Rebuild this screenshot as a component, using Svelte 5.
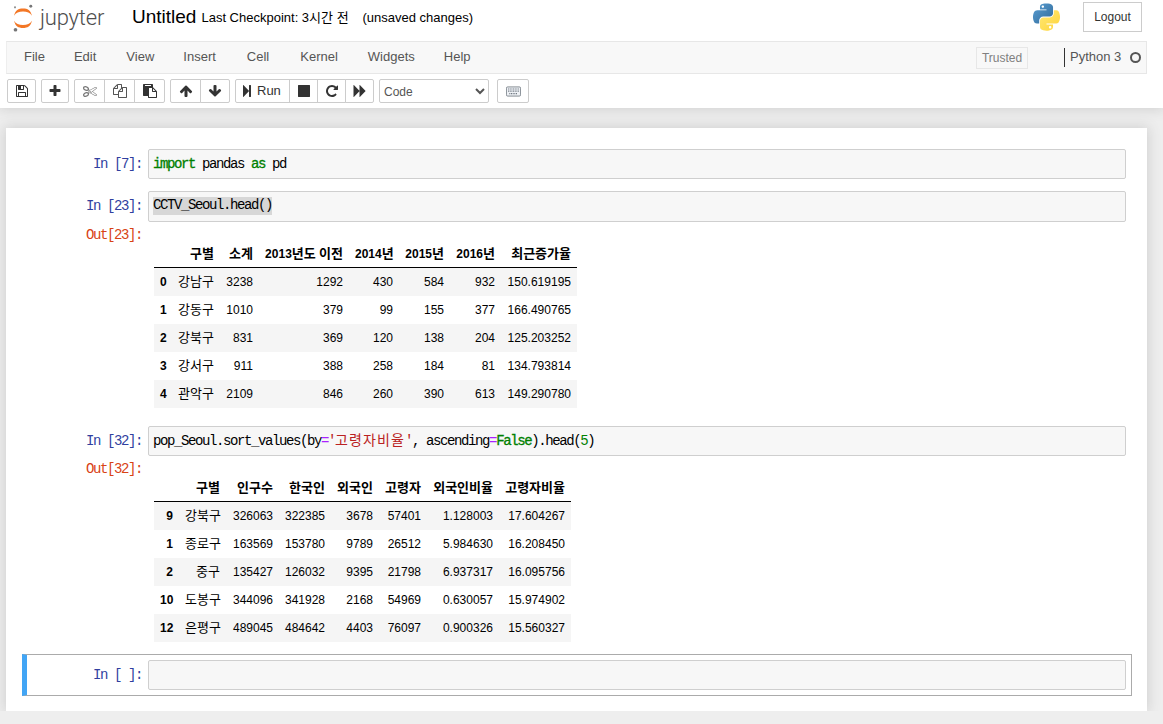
<script>
  const menus = ['File','Edit','View','Insert','Cell','Kernel','Widgets','Help'];
  const icon = {
    save:'M512 1536h768v-384h-768v384zm896 0h128v-896q0-14-10-38.500t-20-34.500l-281-281q-10-10-34-20t-39-10v416q0 40-28 68t-68 28h-576q-40 0-68-28t-28-68v-416h-128v1280h128v-416q0-40 28-68t68-28h832q40 0 68 28t28 68v416zm-384-928v-320q0-13-9.500-22.500t-22.500-9.500h-192q-13 0-22.500 9.500t-9.500 22.500v320q0 13 9.500 22.500t22.500 9.500h192q13 0 22.500-9.500t9.500-22.500zm640 32v928q0 40-28 68t-68 28h-1344q-40 0-68-28t-28-68v-1344q0-40 28-68t68-28h928q40 0 88 20t76 48l280 280q28 28 48 76t20 88z',
    plus:'M1600 736v192q0 40-28 68t-68 28h-416v416q0 40-28 68t-68 28h-192q-40 0-68-28t-28-68v-416h-416q-40 0-68-28t-28-68v-192q0-40 28-68t68-28h416v-416q0-40 28-68t68-28h192q40 0 68 28t28 68v416h416q40 0 68 28t28 68z',
    cut:'M960 896q26 0 45 19t19 45-19 45-45 19-45-19-19-45 19-45 45-19zm300 64l507 398q28 20 25 56-5 35-35 51l-128 64q-13 7-29 7-17 0-31-8l-690-387-110 66q-8 4-12 5 14 49 10 97-7 77-56 147.500t-132 123.500q-132 84-277 84-136 0-222-78-90-84-79-207 7-76 56-147t131-124q132-84 278-84 83 0 151 31 9-13 22-22l122-73-122-73q-13-9-22-22-68 31-151 31-146 0-278-84-82-53-131-124t-56-147q-5-59 15.500-113t63.500-93q85-79 222-79 145 0 277 84 83 52 132 123t56 148q4 48-10 97 4 1 12 5l110 66 690-387q14-8 31-8 16 0 29 7l128 64q30 16 35 51 3 36-25 56zm-681-260q46-42 21-108t-106-117q-92-59-192-59-74 0-113 36-46 42-21 108t106 117q92 59 192 59 74 0 113-36zm-85 745q81-51 106-117t-21-108q-39-36-113-36-100 0-192 59-81 51-106 117t21 108q39 36 113 36 100 0 192-59zm178-613l96 58v-11q0-36 33-56l14-8-79-47-26 26q-3 3-10 11t-12 12q-2 2-4 3.500t-3 2.500zm224 224l96 32 736-576-128-64-768 431v113l-160 96 9 8q2 2 7 6 4 4 11 12t11 12l26 26zm704 416l128-64-520-408-177 138q-2 3-13 7z',
    copy:'M1696 384q40 0 68 28t28 68v1216q0 40-28 68t-68 28h-960q-40 0-68-28t-28-68v-288h-544q-40 0-68-28t-28-68v-672q0-40 20-88t48-76l408-408q28-28 76-48t88-20h416q40 0 68 28t28 68v328q68-40 128-40h416zm-544 213l-299 299h299v-299zm-640-384l-299 299h299v-299zm196 647l316-316v-416h-384v416q0 40-28 68t-68 28h-416v640h512v-256q0-40 20-88t48-76zm956 804v-1152h-384v416q0 40-28 68t-68 28h-416v640h896z',
    paste:'M768 1664h896v-640h-416q-40 0-68-28t-28-68v-416h-384v1152zm256-1440v-64q0-13-9.500-22.500t-22.500-9.500h-704q-13 0-22.500 9.500t-9.500 22.500v64q0 13 9.500 22.500t22.500 9.500h704q13 0 22.500-9.500t9.500-22.500zm256 672h299l-299-299v299zm512 128v672q0 40-28 68t-68 28h-960q-40 0-68-28t-28-68v-160h-544q-40 0-68-28t-28-68v-1344q0-40 28-68t68-28h1088q40 0 68 28t28 68v328q21 13 36 28l408 408q28 28 48 76t20 88z',
    up:'M1675 971q0 51-37 90l-75 75q-38 38-91 38-54 0-90-38l-294-293v704q0 52-37.500 84.500t-90.500 32.500h-128q-53 0-90.500-32.500t-37.500-84.500v-704l-294 293q-36 38-90 38t-90-38l-75-75q-38-38-38-90 0-53 38-91l651-651q35-37 90-37 54 0 91 37l651 651q37 39 37 91z',
    down:'M1675 832q0 53-37 90l-651 652q-39 37-91 37-53 0-90-37l-651-652q-38-36-38-90 0-53 38-91l74-75q39-37 91-37 53 0 90 37l294 294v-704q0-52 38-90t90-38h128q52 0 90 38t38 90v704l294-294q37-37 90-37 52 0 91 37l75 75q37 39 37 91z',
    step:'M429 1651q-19 19-32 13t-13-32v-1472q0-26 13-32t32 13l710 710q9 9 13 19v-678q0-26 19-45t45-19h128q26 0 45 19t19 45v1408q0 26-19 45t-45 19h-128q-26 0-45-19t-19-45v-678q-4 10-13 19z',
    stop:'M1664 192v1408q0 26-19 45t-45 19h-1408q-26 0-45-19t-19-45v-1408q0-26 19-45t45-19h1408q26 0 45 19t19 45z',
    repeat:'M1664 256v448q0 26-19 45t-45 19h-448q-42 0-59-40-17-39 14-69l138-138q-148-137-349-137-104 0-198.500 40.500t-163.500 109.500-109.500 163.500-40.500 198.500 40.500 198.500 109.500 163.500 163.500 109.500 198.500 40.500q119 0 225-52t179-147q7-10 23-12 15 0 25 9l137 138q9 8 9.500 20.500t-7.500 22.500q-109 132-264 204.500t-327 72.500q-156 0-298-61t-245-164-164-245-61-298 61-298 164-245 245-164 298-61q147 0 284.500 55.500t244.500 156.500l130-129q29-31 70-14 39 17 39 59z',
    ff:'M109 1651q-19 19-32 13t-13-32v-1472q0-26 13-32t32 13l710 710q9 9 13 19v-710q0-26 13-32t32 13l710 710q19 19 19 45t-19 45l-710 710q-19 19-32 13t-13-32v-710q-4 10-13 19z'
  };
  const t1 = {
    widths:[18,48,39,90,50,51,51,76],
    head:['','구별','소계','2013년도 이전','2014년','2015년','2016년','최근증가율'],
    rows:[
      ['0','강남구','3238','1292','430','584','932','150.619195'],
      ['1','강동구','1010','379','99','155','377','166.490765'],
      ['2','강북구','831','369','120','138','204','125.203252'],
      ['3','강서구','911','388','258','184','81','134.793814'],
      ['4','관악구','2109','846','260','390','613','149.290780']
    ]
  };
  const t2 = {
    widths:[25,47,53,52,48,48,72,72],
    head:['','구별','인구수','한국인','외국인','고령자','외국인비율','고령자비율'],
    rows:[
      ['9','강북구','326063','322385','3678','57401','1.128003','17.604267'],
      ['1','종로구','163569','153780','9789','26512','5.984630','16.208450'],
      ['2','중구','135427','126032','9395','21798','6.937317','16.095756'],
      ['10','도봉구','344096','341928','2168','54969','0.630057','15.974902'],
      ['12','은평구','489045','484642','4403','76097','0.900326','15.560327']
    ]
  };
  const parts = (s) => s.split(/([가-힣]+)/).filter(Boolean);
  const isKo = (s) => /[가-힣]/.test(s);
  const total = (t) => t.widths.reduce((a, b) => a + b, 0);
</script>

{#snippet fa(name)}
  <svg class="fa {name}" viewBox="0 0 1792 1792" aria-hidden="true"><path d={icon[name]} /></svg>
{/snippet}

{#snippet txt(s)}{#each parts(s) as p}{#if isKo(p)}<span class="ko">{p}</span>{:else}{p}{/if}{/each}{/snippet}

{#snippet frame(t)}
  <table class="df" style="width:{total(t)}px">
    <colgroup>{#each t.widths as w}<col style="width:{w}px" />{/each}</colgroup>
    <thead><tr>{#each t.head as h}<th>{@render txt(h)}</th>{/each}</tr></thead>
    <tbody>
      {#each t.rows as r}
        <tr>{#each r as c, i}{#if i === 0}<th>{c}</th>{:else}<td>{@render txt(c)}</td>{/if}{/each}</tr>
      {/each}
    </tbody>
  </table>
{/snippet}

<div class="top">
  <header class="head">
    <div class="brand">
      <svg class="jlogo" viewBox="0 0 24 32" aria-hidden="true">
        <path fill="#f37726" d="M2.2 13.5C3.6 7.6 7 5.6 12 5.6s8.400 2 9.800 7.900C19.800 10.200 16.500 8.800 12 8.800S4.200 10.200 2.200 13.500z"/>
        <path fill="#f37726" d="M2.200 18.900C3.600 24.800 7 26.800 12 26.800s8.400-2 9.800-7.900c-2 3.300-5.300 4.700-9.800 4.700s-7.800-1.400-9.800-4.700z"/>
        <circle cx="20.500" cy="3.200" r="1.600" fill="#767677"/>
        <circle cx="3.800" cy="28.800" r="2" fill="#767677"/>
        <circle cx="3.300" cy="4.400" r="1.100" fill="#8a8a8a"/>
      </svg>
      <span class="word">jupyter</span>
    </div>
    <span class="title">Untitled</span>
    <span class="ckpt">Last Checkpoint: 3시간 전</span>
    <span class="unsaved">(unsaved changes)</span>
    <svg class="py" viewBox="0 0 111 112" aria-hidden="true">
      <defs>
        <linearGradient id="pb" x1="0" y1="0" x2="1" y2="1"><stop offset="0" stop-color="#5a9fd4"/><stop offset="1" stop-color="#306998"/></linearGradient>
        <linearGradient id="py" x1="0" y1="0" x2="1" y2="1"><stop offset="0" stop-color="#ffe873"/><stop offset="1" stop-color="#ffd43b"/></linearGradient>
      </defs>
      <path fill="url(#pb)" d="M54.919 0.001C50.335 0.022 45.958 0.413 42.106 1.095 30.760 3.099 28.700 7.295 28.700 15.032V25.250H55.513V28.656H28.700 18.638C10.845 28.656 3.906 33.344 1.763 42.263c-2.473 10.221-2.582 16.600 0 27.271 1.917 7.943 6.495 13.603 14.349 13.603H25.400V70.877c0-8.858 7.665-16.673 16.768-16.673H68.950c7.455 0 13.406-6.138 13.406-13.625V15.032c0-7.266-6.130-12.725-13.406-13.937C64.344 0.329 59.503-0.020 54.919 0.001zM40.419 8.220c2.770 0 5.031 2.299 5.031 5.125 0 2.816-2.262 5.094-5.031 5.094-2.779 0-5.031-2.277-5.031-5.094 0-2.826 2.252-5.125 5.031-5.125z"/>
      <path fill="url(#py)" d="M85.638 28.657V40.563c0 9.231-7.826 17-16.750 17H42.106c-7.336 0-13.406 6.279-13.406 13.625v25.531c0 7.266 6.319 11.540 13.406 13.625 8.487 2.496 16.626 2.947 26.781 0 6.750-1.954 13.406-5.888 13.406-13.625V86.500H55.513v-3.406H82.294 95.701c7.792 0 10.696-5.435 13.406-13.594 2.799-8.399 2.680-16.476 0-27.250-1.926-7.757-5.604-13.594-13.406-13.594zM70.575 93.313c2.779 0 5.031 2.277 5.031 5.094 0 2.826-2.252 5.125-5.031 5.125-2.770 0-5.031-2.299-5.031-5.125 0-2.816 2.262-5.094 5.031-5.094z"/>
    </svg>
    <button class="logout">Logout</button>
  </header>

  <nav class="menubar">
    <ul class="menus">{#each menus as m}<li>{m}</li>{/each}</ul>
    <span class="trusted">Trusted</span>
    <span class="kernel">Python 3</span>
    <span class="kstate"></span>
  </nav>

  <div class="toolbar">
    <div class="grp"><button class="b w-save">{@render fa('save')}</button></div>
    <div class="grp"><button class="b w-plus">{@render fa('plus')}</button></div>
    <div class="grp"><button class="b w31">{@render fa('cut')}</button><button class="b w31">{@render fa('copy')}</button><button class="b w31">{@render fa('paste')}</button></div>
    <div class="grp"><button class="b w31">{@render fa('up')}</button><button class="b w30">{@render fa('down')}</button></div>
    <div class="grp">
      <button class="b run">{@render fa('step')}<span class="runlabel">Run</span></button><button class="b n">{@render fa('stop')}</button><button class="b n">{@render fa('repeat')}</button><button class="b n">{@render fa('ff')}</button>
    </div>
    <select class="sel"><option>Code</option></select>
    <button class="b kb">
      <svg viewBox="0 0 18 12" class="kbi" aria-hidden="true">
        <rect x=".5" y=".5" width="17" height="11" rx="1.500" fill="#eef1f5" stroke="#6f7780"/>
        <path d="M2.500 3h13M2.500 5.500h13M4 8.500h10" stroke="#6f7780" stroke-width="1.300" stroke-dasharray="1.200 .8" fill="none"/>
      </svg>
    </button>
  </div>
</div>

<main class="site">
  <div class="nb">
    <section class="cell">
      <div class="row"><div class="prompt in">In [7]:</div><div class="input"><span class="k">import</span> pandas <span class="k">as</span> pd</div></div>
    </section>
    <section class="cell">
      <div class="row"><div class="prompt in">In [23]:</div><div class="input tall"><span class="sel-text">CCTV_Seoul.head()</span></div></div>
      <div class="row"><div class="prompt out">Out[23]:</div><div class="output">{@render frame(t1)}</div></div>
    </section>
    <section class="cell">
      <div class="row"><div class="prompt in">In [32]:</div><div class="input">pop_Seoul.sort_values(by<span class="o">=</span><span class="s">'<span class="kc">고령자비율</span>'</span>, ascending<span class="o">=</span><span class="k">False</span>).head(<span class="m">5</span>)</div></div>
      <div class="row"><div class="prompt out">Out[32]:</div><div class="output">{@render frame(t2)}</div></div>
    </section>
    <section class="cell selected">
      <div class="row"><div class="prompt in">In [ ]:</div><div class="input"></div></div>
    </section>
  </div>
</main>

<style>
  :global(body) { margin: 0; background: #eee; font-family: "Liberation Sans", "Noto Sans CJK KR", sans-serif; font-size: 13px; color: #000; overflow: hidden; }
  .top { background: #fff; height: 108px; box-shadow: 0 0 12px 1px rgba(87,87,87,.2); position: relative; box-sizing: border-box; }
  .head { height: 41px; display: flex; align-items: flex-start; box-sizing: border-box; padding-left: 12px; }
  .brand { display: flex; align-items: flex-start; width: 120px; height: 36px; }
  .jlogo { width: 22px; height: 30px; margin-top: 3px; flex: none; }
  .word { font-family: Roboto, sans-serif; font-weight: 300; font-size: 22px; line-height: 32px; color: #4e4e4e; margin-left: 6px; margin-top: 2px; letter-spacing: -.2px; }
  .title { font-size: 19px; line-height: 24px; margin-top: 5px; }
  .ckpt { font-size: 13px; line-height: 16px; margin: 10px 0 0 5px; width: 161px; white-space: nowrap; }
  .unsaved { font-size: 13px; line-height: 16px; margin-top: 10px; }
  .py { width: 27px; height: 28px; margin: 3px 0 0 auto; }
  .logout { width: 59px; height: 30px; margin: 2px 21px 0 23px; background: #fff; border: 1px solid #ccc; border-radius: 0; font: 12px "Liberation Sans", sans-serif; color: #333; padding: 0; }
  .menubar { margin: 0 16px 0 6px; height: 33px; box-sizing: border-box; border: 1px solid #e7e7e7; border-left-color: #eee; background: #f8f8f8; display: flex; align-items: center; color: #555; }
  .menus { list-style: none; margin: -2px auto 0 0; padding: 0; display: flex; }
  .menus li { font-size: 13px; line-height: 18px; }
  .menus li:nth-child(1) { margin-left: 17px; }
  .menus li:nth-child(2) { margin-left: 29px; }
  .menus li:nth-child(3) { margin-left: 30px; }
  .menus li:nth-child(4) { margin-left: 29px; }
  .menus li:nth-child(5) { margin-left: 31px; }
  .menus li:nth-child(6) { margin-left: 31px; }
  .menus li:nth-child(7) { margin-left: 30px; }
  .menus li:nth-child(8) { margin-left: 29px; }
  .trusted { width: 52px; height: 22px; box-sizing: border-box; border: 1px solid #e7e7e7; font-size: 12px; line-height: 20px; text-align: center; color: #808080; }
  .kernel { margin-left: 36px; border-left: 1px solid #333; height: 19px; line-height: 18px; padding-left: 5px; font-size: 13px; width: 60px; }
  .kstate { width: 11px; height: 11px; box-sizing: border-box; border: 2px solid #555; border-radius: 50%; margin: 0 5px 0 0; }
  .toolbar { display: flex; align-items: stretch; height: 24px; margin: 5px 0 0 7px; }
  .grp { display: flex; margin-right: 5px; }
  .b { width: 30px; height: 24px; box-sizing: border-box; border: 1px solid #ccc; background: #fff; padding: 0; margin: 0 0 0 -1px; display: flex; align-items: center; justify-content: center; color: #333; font: 13px "Liberation Sans", sans-serif; }
  .grp .b:first-child { margin-left: 0; border-radius: 2px 0 0 2px; }
  .grp .b:last-child { border-radius: 0 2px 2px 0; }
  .grp .b:only-child { border-radius: 2px; }
  .w-save { width: 29px; }
  .w-plus { width: 28px; }
  .w31 { width: 31px; }
  .w30 { width: 30px; }
  .b.run { width: 55px; gap: 3px; justify-content: flex-start; padding-left: 4px; }
  .runlabel { margin-top: -2px; }
  .b.n { width: 29px; }
  .fa { width: 14px; height: 14px; fill: #333; display: block; flex: none; }
  .fa.cut { fill: #777; }
  .fa.copy { fill: #555; }
  .sel { width: 110px; height: 24px; box-sizing: border-box; border: 1px solid #ccc; border-radius: 2px; background: #fff; font: 12px "Liberation Sans", sans-serif; color: #555; padding: 1px 0 0 0; margin: 0; }
  .kb { width: 32px !important; margin-left: 8px !important; border-radius: 2px; }
  .kbi { width: 15px; height: 11px; }
  .site { padding: 20px 16px 0 6px; }
  .nb { background: #fff; box-shadow: 0 0 12px 1px rgba(87,87,87,.2); padding: 15px 15px 15px 16px; height: 583px; box-sizing: border-box; }
  .cell { border: 1px solid transparent; padding: 5px; }
  .cell.selected { border-color: #ababab; border-left: 5px solid #42a5f5; padding-left: 1px; }
  .row { display: flex; }
  .prompt { width: 120px; height: 30px; box-sizing: border-box; text-align: right; font: 14px/31px "Liberation Mono", "Noto Sans CJK KR", monospace; letter-spacing: -1.400px; padding: 0 6px 0 0; flex: none; }
  .in { color: #303f9f; }
  .out { color: #d84315; line-height: 27px; height: 24px; }
  .input { flex: 1; height: 30px; box-sizing: border-box; background: #f7f7f7; border: 1px solid #cfcfcf; border-radius: 2px; font: 14px/29px "Liberation Mono", "Noto Sans CJK KR", monospace; letter-spacing: -1.400px; padding-left: 4px; color: #000; white-space: pre; overflow: hidden; }
  .tall { height: 31px; line-height: 28px; }
  .sel-text { background: #d7d7d7; display: inline-block; height: 18px; line-height: 17px; vertical-align: 1px; }
  .k { color: #008000; -webkit-text-stroke: .3px #008000; }
  .s { color: #ba2121; }
  .kc { font-size: 14px; letter-spacing: 1.120px; line-height: 1; }
  .o { color: #aa22ff; }
  .m { color: #008000; }
  .output { padding: 18px 0 6px 6px; flex: 1; }
  .df { border-collapse: separate; border-spacing: 0; table-layout: fixed; font-size: 12px; color: #000; }
  .df th, .df td { text-align: right; padding: 0 6px; height: 28px; white-space: nowrap; box-sizing: border-box; vertical-align: middle; font-weight: normal; }
  .df th { font-weight: bold; }
  .df thead th { border-bottom: 1px solid #000; }
  .df tbody tr:nth-child(odd) { background: #f5f5f5; }
  .ko { font-size: 13px; line-height: 1; }
</style>
